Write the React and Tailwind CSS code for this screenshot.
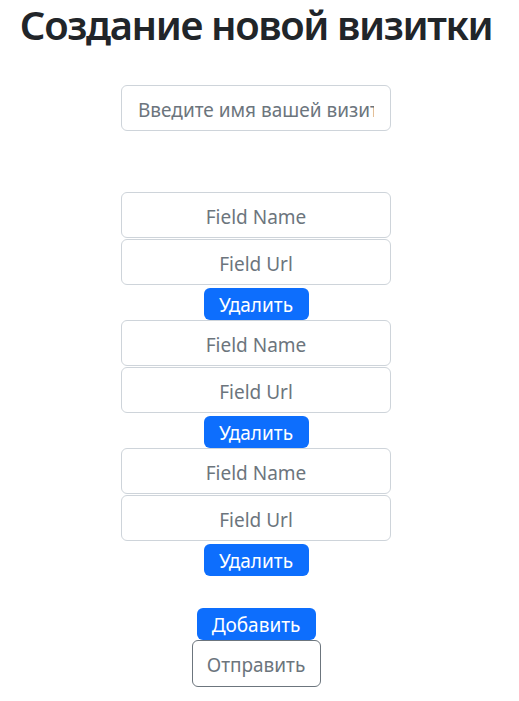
export default function App() {
  const fields = [0, 1, 2]

  return (
    <div className="w-[512px] flex flex-col items-center font-['Noto_Sans',sans-serif] text-[#212529] bg-white min-h-[701px]">
      <h1 className="text-[40px] leading-[50px] font-semibold tracking-[-1.4px] mt-0">Создание новой визитки</h1>

      <input
        type="text"
        placeholder="Введите имя вашей визитки"
        className="mt-[35px] w-[270px] h-[46px] px-4 pt-1 text-[19px] border border-[#ced4da] rounded-md placeholder:text-[#6c757d] outline-none"
      />

      <div className="mt-[61px] flex flex-col items-center">
        {fields.map((i) => (
          <div key={i} className="flex flex-col items-center">
            <input
              type="text"
              placeholder="Field Name"
              className="w-[270px] h-[46px] px-4 pt-1 text-[19px] text-center border border-[#ced4da] rounded-md placeholder:text-[#6c757d] outline-none"
            />
            <input
              type="text"
              placeholder="Field Url"
              className="mt-px w-[270px] h-[46px] px-4 pt-1 text-[19px] text-center border border-[#ced4da] rounded-md placeholder:text-[#6c757d] outline-none"
            />
            <button className="mt-[3px] w-[105px] h-8 pt-0.5 bg-[#0d6efd] text-white text-[19px] leading-none rounded-md">
              Удалить
            </button>
          </div>
        ))}
      </div>

      <button className="mt-8 w-[119px] h-8 pt-0.5 bg-[#0d6efd] text-white text-[19px] leading-none rounded-md">
        Добавить
      </button>
      <button className="w-[129px] h-[47px] pt-1 border border-[#6c757d] text-[#6c757d] text-[19px] rounded-md">
        Отправить
      </button>
    </div>
  )
}
